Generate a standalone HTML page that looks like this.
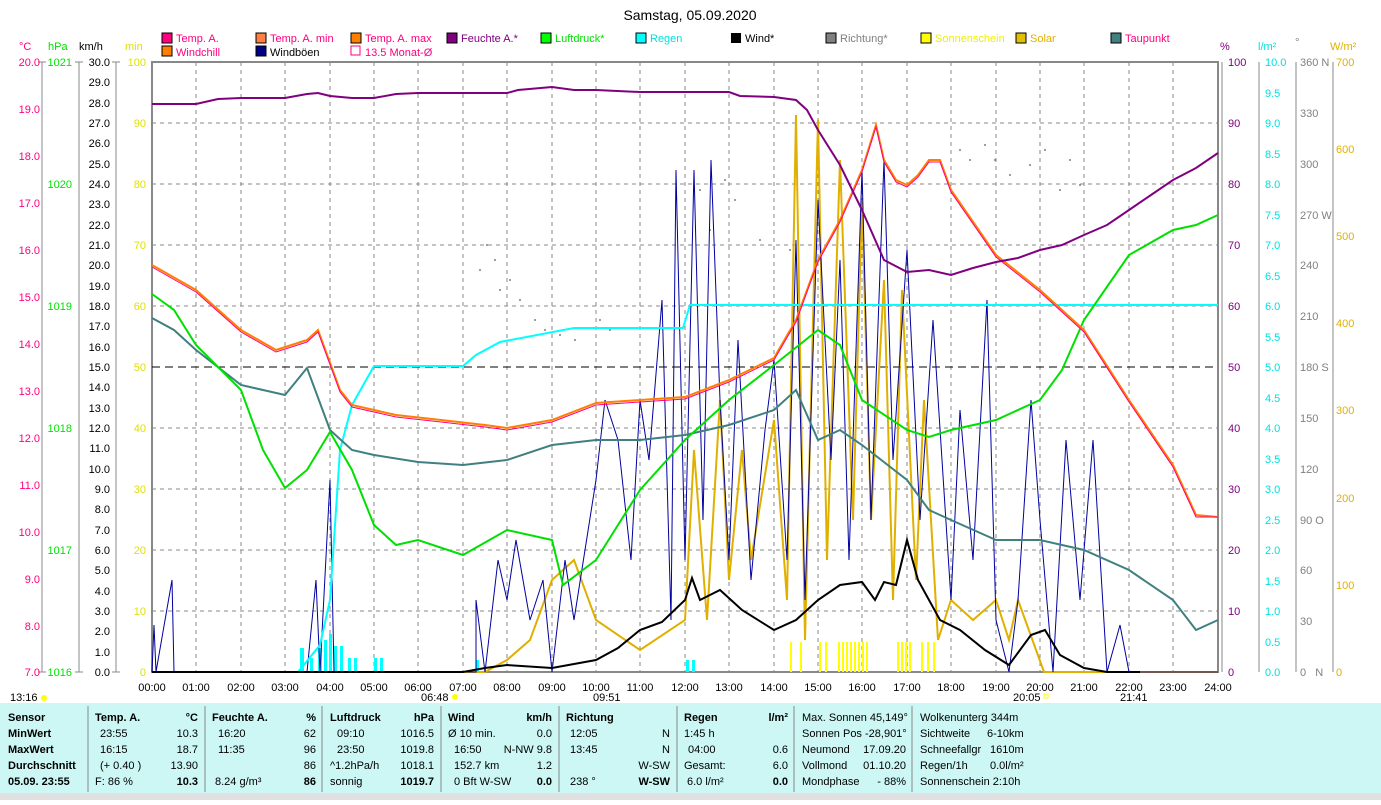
<!DOCTYPE html>
<html><head><meta charset="utf-8"><style>
body{margin:0;width:1381px;height:800px;background:#fff;overflow:hidden;font-family:"Liberation Sans",sans-serif;}
svg text{font-family:"Liberation Sans",sans-serif;font-size:11px}
</style></head><body>
<svg width="1381" height="800" xmlns="http://www.w3.org/2000/svg">
<text x="690" y="20" text-anchor="middle" font-size="14" style="font-size:14px">Samstag, 05.09.2020</text>
<g font-size="11">
<rect x="162" y="33" width="10" height="10" fill="#ff0080" stroke="#000"/><text x="176" y="42" fill="#ff0080">Temp. A.</text>
<rect x="256" y="33" width="10" height="10" fill="#ff8040" stroke="#000"/><text x="270" y="42" fill="#ff0080">Temp. A. min</text>
<rect x="351" y="33" width="10" height="10" fill="#ff8000" stroke="#000"/><text x="365" y="42" fill="#ff0080">Temp. A. max</text>
<rect x="447" y="33" width="10" height="10" fill="#800080" stroke="#000"/><text x="461" y="42" fill="#800080">Feuchte A.*</text>
<rect x="541" y="33" width="10" height="10" fill="#00ff00" stroke="#000"/><text x="555" y="42" fill="#00e000">Luftdruck*</text>
<rect x="636" y="33" width="10" height="10" fill="#00ffff" stroke="#000"/><text x="650" y="42" fill="#00e0e0">Regen</text>
<rect x="731" y="33" width="10" height="10" fill="#000"/><text x="745" y="42">Wind*</text>
<rect x="826" y="33" width="10" height="10" fill="#808080" stroke="#000"/><text x="840" y="42" fill="#808080">Richtung*</text>
<rect x="921" y="33" width="10" height="10" fill="#ffff00" stroke="#000"/><text x="935" y="42" fill="#f0f000">Sonnenschein</text>
<rect x="1016" y="33" width="10" height="10" fill="#e0c000" stroke="#000"/><text x="1030" y="42" fill="#e0b000">Solar</text>
<rect x="1111" y="33" width="10" height="10" fill="#408080" stroke="#000"/><text x="1125" y="42" fill="#ff0080">Taupunkt</text>
<rect x="162" y="46" width="10" height="10" fill="#ff8000" stroke="#000"/><text x="176" y="56" fill="#ff0080">Windchill</text>
<rect x="256" y="46" width="10" height="10" fill="#000080" stroke="#000"/><text x="270" y="56">Windböen</text>
<rect x="351" y="46" width="9" height="9" fill="none" stroke="#ff0080"/><text x="365" y="56" fill="#ff0080">13.5 Monat-Ø</text>
</g>
<text x="19" y="50" fill="#ff0080">°C</text><text x="48" y="50" fill="#00e000">hPa</text><text x="79" y="50">km/h</text><text x="125" y="50" fill="#e0e000">min</text>
<text x="1220" y="50" fill="#800080">%</text><text x="1258" y="50" fill="#00e0e0">l/m²</text><text x="1295" y="46" fill="#808080">°</text><text x="1330" y="50" fill="#e0b000">W/m²</text>
<rect x="152" y="62" width="1066" height="610" fill="none" stroke="#888" stroke-width="2"/>
<g stroke="#888" stroke-dasharray="4,4" stroke-width="1">
<path d="M196 62V672M241 62V672M285 62V672M330 62V672M374 62V672M418 62V672M463 62V672M507 62V672M552 62V672M596 62V672M640 62V672M685 62V672M729 62V672M774 62V672M818 62V672M862 62V672M907 62V672M951 62V672M996 62V672M1040 62V672M1084 62V672M1129 62V672M1173 62V672"/>
<path d="M152 123H1218M152 184H1218M152 245H1218M152 306H1218M152 428H1218M152 489H1218M152 550H1218M152 611H1218"/>
</g>
<path d="M152 367H1218" stroke="#000" stroke-dasharray="8,5"/>
<g stroke="#888"><path d="M42 62V672M79 62V672M116 62V672"/>
<path d="M38 62H46M38 672H46M75 62H83M75 672H83M112 62H120M112 672H120"/></g>
<g font-size="11" text-anchor="end">
<g fill="#ff0080">
<text x="40" y="66">20.0</text><text x="40" y="113">19.0</text><text x="40" y="160">18.0</text><text x="40" y="207">17.0</text><text x="40" y="254">16.0</text><text x="40" y="301">15.0</text><text x="40" y="348">14.0</text><text x="40" y="395">13.0</text><text x="40" y="442">12.0</text><text x="40" y="489">11.0</text><text x="40" y="536">10.0</text><text x="40" y="583">9.0</text><text x="40" y="630">8.0</text><text x="40" y="676">7.0</text></g>
<g fill="#00e000"><text x="72" y="66">1021</text><text x="72" y="188">1020</text><text x="72" y="310">1019</text><text x="72" y="432">1018</text><text x="72" y="554">1017</text><text x="72" y="676">1016</text></g>
<g>
<text x="110" y="66">30.0</text><text x="110" y="86">29.0</text><text x="110" y="107">28.0</text><text x="110" y="127">27.0</text><text x="110" y="147">26.0</text><text x="110" y="168">25.0</text><text x="110" y="188">24.0</text><text x="110" y="208">23.0</text><text x="110" y="229">22.0</text><text x="110" y="249">21.0</text><text x="110" y="269">20.0</text><text x="110" y="290">19.0</text><text x="110" y="310">18.0</text><text x="110" y="330">17.0</text><text x="110" y="351">16.0</text><text x="110" y="371">15.0</text><text x="110" y="391">14.0</text><text x="110" y="412">13.0</text><text x="110" y="432">12.0</text><text x="110" y="452">11.0</text><text x="110" y="473">10.0</text><text x="110" y="493">9.0</text><text x="110" y="513">8.0</text><text x="110" y="534">7.0</text><text x="110" y="554">6.0</text><text x="110" y="574">5.0</text><text x="110" y="595">4.0</text><text x="110" y="615">3.0</text><text x="110" y="635">2.0</text><text x="110" y="656">1.0</text><text x="110" y="676">0.0</text></g>
<g fill="#e0e000"><text x="146" y="66">100</text><text x="146" y="127">90</text><text x="146" y="188">80</text><text x="146" y="249">70</text><text x="146" y="310">60</text><text x="146" y="371">50</text><text x="146" y="432">40</text><text x="146" y="493">30</text><text x="146" y="554">20</text><text x="146" y="615">10</text><text x="146" y="676">0</text></g>
</g>
<g stroke="#888"><path d="M1222 62V672M1259 62V672M1296 62V672M1333 62V672"/></g>
<g font-size="11">
<g fill="#800080"><text x="1228" y="66">100</text><text x="1228" y="127">90</text><text x="1228" y="188">80</text><text x="1228" y="249">70</text><text x="1228" y="310">60</text><text x="1228" y="371">50</text><text x="1228" y="432">40</text><text x="1228" y="493">30</text><text x="1228" y="554">20</text><text x="1228" y="615">10</text><text x="1228" y="676">0</text></g>
<g fill="#00e0e0"><text x="1265" y="66">10.0</text><text x="1265" y="97">9.5</text><text x="1265" y="127">9.0</text><text x="1265" y="158">8.5</text><text x="1265" y="188">8.0</text><text x="1265" y="219">7.5</text><text x="1265" y="249">7.0</text><text x="1265" y="280">6.5</text><text x="1265" y="310">6.0</text><text x="1265" y="341">5.5</text><text x="1265" y="371">5.0</text><text x="1265" y="402">4.5</text><text x="1265" y="432">4.0</text><text x="1265" y="463">3.5</text><text x="1265" y="493">3.0</text><text x="1265" y="524">2.5</text><text x="1265" y="554">2.0</text><text x="1265" y="585">1.5</text><text x="1265" y="615">1.0</text><text x="1265" y="646">0.5</text><text x="1265" y="676">0.0</text></g>
<g fill="#808080"><text x="1300" y="66">360 N</text><text x="1300" y="117">330</text><text x="1300" y="168">300</text><text x="1300" y="219">270 W</text><text x="1300" y="269">240</text><text x="1300" y="320">210</text><text x="1300" y="371">180 S</text><text x="1300" y="422">150</text><text x="1300" y="473">120</text><text x="1300" y="524">90 O</text><text x="1300" y="574">60</text><text x="1300" y="625">30</text><text x="1300" y="676">0 &#160; N</text></g>
<g fill="#e0b000"><text x="1336" y="66">700</text><text x="1336" y="153">600</text><text x="1336" y="240">500</text><text x="1336" y="327">400</text><text x="1336" y="414">300</text><text x="1336" y="502">200</text><text x="1336" y="589">100</text><text x="1336" y="676">0</text></g>
</g>
<g fill="#00ffff"><rect x="300" y="648" width="4" height="24"/><rect x="310" y="658" width="3" height="14"/><rect x="318" y="648" width="4" height="24"/><rect x="324" y="640" width="3" height="32"/><rect x="329" y="634" width="3" height="38"/><rect x="334" y="646" width="3" height="26"/><rect x="340" y="646" width="3" height="26"/><rect x="348" y="658" width="3" height="14"/><rect x="354" y="658" width="3" height="14"/><rect x="374" y="658" width="3" height="14"/><rect x="380" y="658" width="3" height="14"/><rect x="476" y="660" width="3" height="12"/><rect x="686" y="660" width="3" height="12"/><rect x="692" y="660" width="3" height="12"/></g>
<g fill="#ffff00"><rect x="790" y="642" width="2" height="30"/><rect x="800" y="642" width="2" height="30"/><rect x="819" y="642" width="2" height="30"/><rect x="825" y="642" width="2" height="30"/><rect x="838" y="642" width="2" height="30"/><rect x="842" y="642" width="2" height="30"/><rect x="846" y="642" width="2" height="30"/><rect x="850" y="642" width="2" height="30"/><rect x="854" y="642" width="2" height="30"/><rect x="858" y="642" width="2" height="30"/><rect x="862" y="642" width="2" height="30"/><rect x="866" y="642" width="2" height="30"/><rect x="897" y="642" width="2" height="30"/><rect x="901" y="642" width="2" height="30"/><rect x="905" y="642" width="2" height="30"/><rect x="909" y="642" width="2" height="30"/><rect x="921" y="642" width="2" height="30"/><rect x="927" y="642" width="2" height="30"/><rect x="933" y="642" width="2" height="30"/></g>
<g fill="#808080"><circle cx="480" cy="270" r="1"/><circle cx="487" cy="245" r="1"/><circle cx="495" cy="260" r="1"/><circle cx="500" cy="290" r="1"/><circle cx="510" cy="280" r="1"/><circle cx="520" cy="300" r="1"/><circle cx="535" cy="320" r="1"/><circle cx="545" cy="330" r="1"/><circle cx="560" cy="335" r="1"/><circle cx="575" cy="340" r="1"/><circle cx="600" cy="320" r="1"/><circle cx="610" cy="330" r="1"/><circle cx="700" cy="190" r="1"/><circle cx="710" cy="230" r="1"/><circle cx="725" cy="180" r="1"/><circle cx="735" cy="200" r="1"/><circle cx="760" cy="240" r="1"/><circle cx="790" cy="250" r="1"/><circle cx="960" cy="150" r="1"/><circle cx="970" cy="160" r="1"/><circle cx="985" cy="145" r="1"/><circle cx="995" cy="160" r="1"/><circle cx="1010" cy="175" r="1"/><circle cx="1030" cy="165" r="1"/><circle cx="1045" cy="150" r="1"/><circle cx="1060" cy="190" r="1"/><circle cx="1070" cy="160" r="1"/><circle cx="1080" cy="185" r="1"/></g>
<polyline fill="none" stroke="#e0b000" stroke-width="2" points="152,672 485,672 507,660 530,640 552,580 574,560 596,620 640,650 685,620 694,450 707,620 720,400 729,580 742,450 751,560 774,420 787,600 796,115 805,640 818,120 827,560 840,160 853,520 862,200 871,520 884,280 893,600 902,290 916,580 924,400 938,640 951,600 973,620 996,600 1009,640 1018,600 1044,672 1218,672"/>
<polyline fill="none" stroke="#0000a0" stroke-width="1" points="152,672 154,625 156,672 172,580 174,672 307,672 316,580 320,672 330,480 334,672 476,672 476,600 485,672 498,560 507,600 516,540 530,620 543,580 552,672 565,560 574,620 596,480 605,400 618,440 631,560 640,400 649,460 662,300 671,620 676,170 685,560 694,170 703,520 711,160 720,400 729,560 738,340 751,580 765,430 774,360 787,560 796,240 805,600 818,200 831,460 840,260 849,560 862,170 871,520 884,160 893,460 907,250 920,520 933,320 951,600 960,410 973,560 987,300 996,620 1009,672 1018,600 1031,400 1040,520 1053,672 1066,440 1080,600 1093,440 1107,672 1120,625 1129,672 1218,672"/>
<polyline fill="none" stroke="#00ffff" stroke-width="2" points="152,672 298,672 320,645 330,600 340,450 352,405 374,366 463,366 476,355 500,342 574,328 683,328 690,305 1218,305"/>
<polyline fill="none" stroke="#408080" stroke-width="2" points="152,318 174,330 196,350 241,385 285,395 307,368 330,430 352,450 374,455 418,462 463,465 507,460 552,445 596,440 640,440 685,435 729,425 774,410 796,390 818,440 840,430 862,445 907,480 929,510 951,520 996,540 1040,540 1084,550 1129,570 1173,600 1196,630 1218,620"/>
<polyline fill="none" stroke="#00e000" stroke-width="2" points="152,294 174,310 196,345 241,390 263,450 285,488 307,470 330,432 352,470 374,525 396,545 418,540 463,555 507,530 552,540 563,585 596,560 640,490 685,440 729,400 774,365 818,330 840,345 862,400 907,430 929,437 951,430 996,420 1040,400 1062,370 1084,320 1129,255 1173,230 1196,225 1218,215"/>
<polyline fill="none" stroke="#ff8000" stroke-width="2" points="152,265 196,290 241,330 276,350 307,340 318,330 340,390 352,405 396,415 441,420 485,425 507,428 552,420 596,403 640,400 685,397 729,380 774,358 796,320 818,260 840,220 862,170 876,125 884,160 896,180 907,185 918,175 929,160 940,160 951,190 996,255 1040,290 1084,330 1129,400 1173,465 1196,515 1218,517"/>
<polyline fill="none" stroke="#ff0080" stroke-width="1" points="152,267 196,292 241,332 276,352 307,342 318,332 340,392 352,407 396,417 441,422 485,427 507,430 552,422 596,405 640,402 685,399 729,382 774,360 796,322 818,262 840,222 862,172 876,127 884,162 896,182 907,187 918,177 929,162 940,162 951,192 996,257 1040,292 1084,332 1129,402 1173,467 1196,517 1218,517"/>
<polyline fill="none" stroke="#800080" stroke-width="2" points="152,104 196,104 218,99 241,98 285,98 307,94 318,93 330,96 352,98 374,98 396,94 418,93 507,93 518,90 552,87 574,90 596,90 640,92 685,92 729,92 740,96 774,97 796,100 807,110 818,130 840,165 862,210 884,260 907,272 929,270 951,275 973,268 996,262 1018,258 1040,250 1062,245 1084,235 1107,225 1129,210 1151,195 1173,180 1196,168 1218,153"/>
<polyline fill="none" stroke="#000" stroke-width="2" points="152,672 463,672 485,668 507,665 552,668 596,660 618,648 640,630 662,622 685,600 692,578 700,600 720,590 742,610 774,630 796,620 818,600 840,585 862,582 875,600 884,582 896,585 907,540 918,580 940,620 960,630 985,650 1009,665 1031,635 1045,630 1060,655 1084,668 1107,672 1140,672"/>
<g font-size="11" text-anchor="middle">
<text x="152" y="691">00:00</text><text x="196" y="691">01:00</text><text x="241" y="691">02:00</text><text x="285" y="691">03:00</text><text x="330" y="691">04:00</text><text x="374" y="691">05:00</text><text x="418" y="691">06:00</text><text x="463" y="691">07:00</text><text x="507" y="691">08:00</text><text x="552" y="691">09:00</text><text x="596" y="691">10:00</text><text x="640" y="691">11:00</text><text x="685" y="691">12:00</text><text x="729" y="691">13:00</text><text x="774" y="691">14:00</text><text x="818" y="691">15:00</text><text x="862" y="691">16:00</text><text x="907" y="691">17:00</text><text x="951" y="691">18:00</text><text x="996" y="691">19:00</text><text x="1040" y="691">20:00</text><text x="1084" y="691">21:00</text><text x="1129" y="691">22:00</text><text x="1173" y="691">23:00</text><text x="1218" y="691">24:00</text>
</g>
<g font-size="11"><text x="10" y="701">13:16</text><circle cx="44" cy="698" r="3" fill="#ffff00"/><text x="421" y="701">06:48</text><circle cx="455" cy="697" r="3" fill="#ffff00"/><text x="593" y="701">09:51</text><text x="1013" y="701">20:05</text><rect x="1044" y="694" width="4" height="4" fill="none" stroke="#ffff00"/><text x="1120" y="701">21:41</text></g>
<rect x="0" y="703" width="1381" height="90" fill="#ccf7f4"/>
<rect x="0" y="793" width="1381" height="7" fill="#e0e0e0"/>
<g stroke="#888"><path d="M88 706V792M205 706V792M322 706V792M441 706V792M559 706V792M677 706V792M794 706V792M912 706V792"/></g>
<g font-size="11">
<g font-weight="bold"><text x="8" y="721">Sensor</text><text x="8" y="737">MinWert</text><text x="8" y="753">MaxWert</text><text x="8" y="769">Durchschnitt</text><text x="8" y="785">05.09. 23:55</text>
<text x="95" y="721">Temp. A.</text><text x="198" y="721" text-anchor="end">°C</text><text x="212" y="721">Feuchte A.</text><text x="316" y="721" text-anchor="end">%</text><text x="330" y="721">Luftdruck</text><text x="434" y="721" text-anchor="end">hPa</text><text x="448" y="721">Wind</text><text x="552" y="721" text-anchor="end">km/h</text><text x="566" y="721">Richtung</text><text x="684" y="721">Regen</text><text x="788" y="721" text-anchor="end">l/m²</text>
<text x="198" y="785" text-anchor="end">10.3</text><text x="316" y="785" text-anchor="end">86</text><text x="434" y="785" text-anchor="end">1019.7</text><text x="552" y="785" text-anchor="end">0.0</text><text x="670" y="785" text-anchor="end">W-SW</text><text x="788" y="785" text-anchor="end">0.0</text></g>
<text x="100" y="737">23:55</text><text x="198" y="737" text-anchor="end">10.3</text><text x="100" y="753">16:15</text><text x="198" y="753" text-anchor="end">18.7</text><text x="100" y="769">(+ 0.40 )</text><text x="198" y="769" text-anchor="end">13.90</text><text x="95" y="785">F: 86 %</text>
<text x="218" y="737">16:20</text><text x="316" y="737" text-anchor="end">62</text><text x="218" y="753">11:35</text><text x="316" y="753" text-anchor="end">96</text><text x="316" y="769" text-anchor="end">86</text><text x="215" y="785">8.24 g/m³</text>
<text x="337" y="737">09:10</text><text x="434" y="737" text-anchor="end">1016.5</text><text x="337" y="753">23:50</text><text x="434" y="753" text-anchor="end">1019.8</text><text x="330" y="769">^1.2hPa/h</text><text x="434" y="769" text-anchor="end">1018.1</text><text x="330" y="785">sonnig</text>
<text x="448" y="737">Ø 10 min.</text><text x="552" y="737" text-anchor="end">0.0</text><text x="454" y="753">16:50</text><text x="552" y="753" text-anchor="end">N-NW 9.8</text><text x="454" y="769">152.7 km</text><text x="552" y="769" text-anchor="end">1.2</text><text x="454" y="785">0 Bft W-SW</text>
<text x="570" y="737">12:05</text><text x="670" y="737" text-anchor="end">N</text><text x="570" y="753">13:45</text><text x="670" y="753" text-anchor="end">N</text><text x="670" y="769" text-anchor="end">W-SW</text><text x="570" y="785">238 °</text>
<text x="684" y="737">1:45 h</text><text x="688" y="753">04:00</text><text x="788" y="753" text-anchor="end">0.6</text><text x="684" y="769">Gesamt:</text><text x="788" y="769" text-anchor="end">6.0</text><text x="687" y="785">6.0 l/m²</text>
<text x="802" y="721">Max. Sonnen 45,149°</text><text x="802" y="737">Sonnen Pos  -28,901°</text><text x="802" y="753">Neumond</text><text x="906" y="753" text-anchor="end">17.09.20</text><text x="802" y="769">Vollmond</text><text x="906" y="769" text-anchor="end">01.10.20</text><text x="802" y="785">Mondphase</text><text x="906" y="785" text-anchor="end">- 88%</text>
<text x="920" y="721">Wolkenunterg   344m</text><text x="920" y="737">Sichtweite</text><text x="987" y="737">6-10km</text><text x="920" y="753">Schneefallgr</text><text x="990" y="753">1610m</text><text x="920" y="769">Regen/1h</text><text x="990" y="769">0.0l/m²</text><text x="920" y="785">Sonnenschein  2:10h</text>
</g>
</svg>
</body></html>
